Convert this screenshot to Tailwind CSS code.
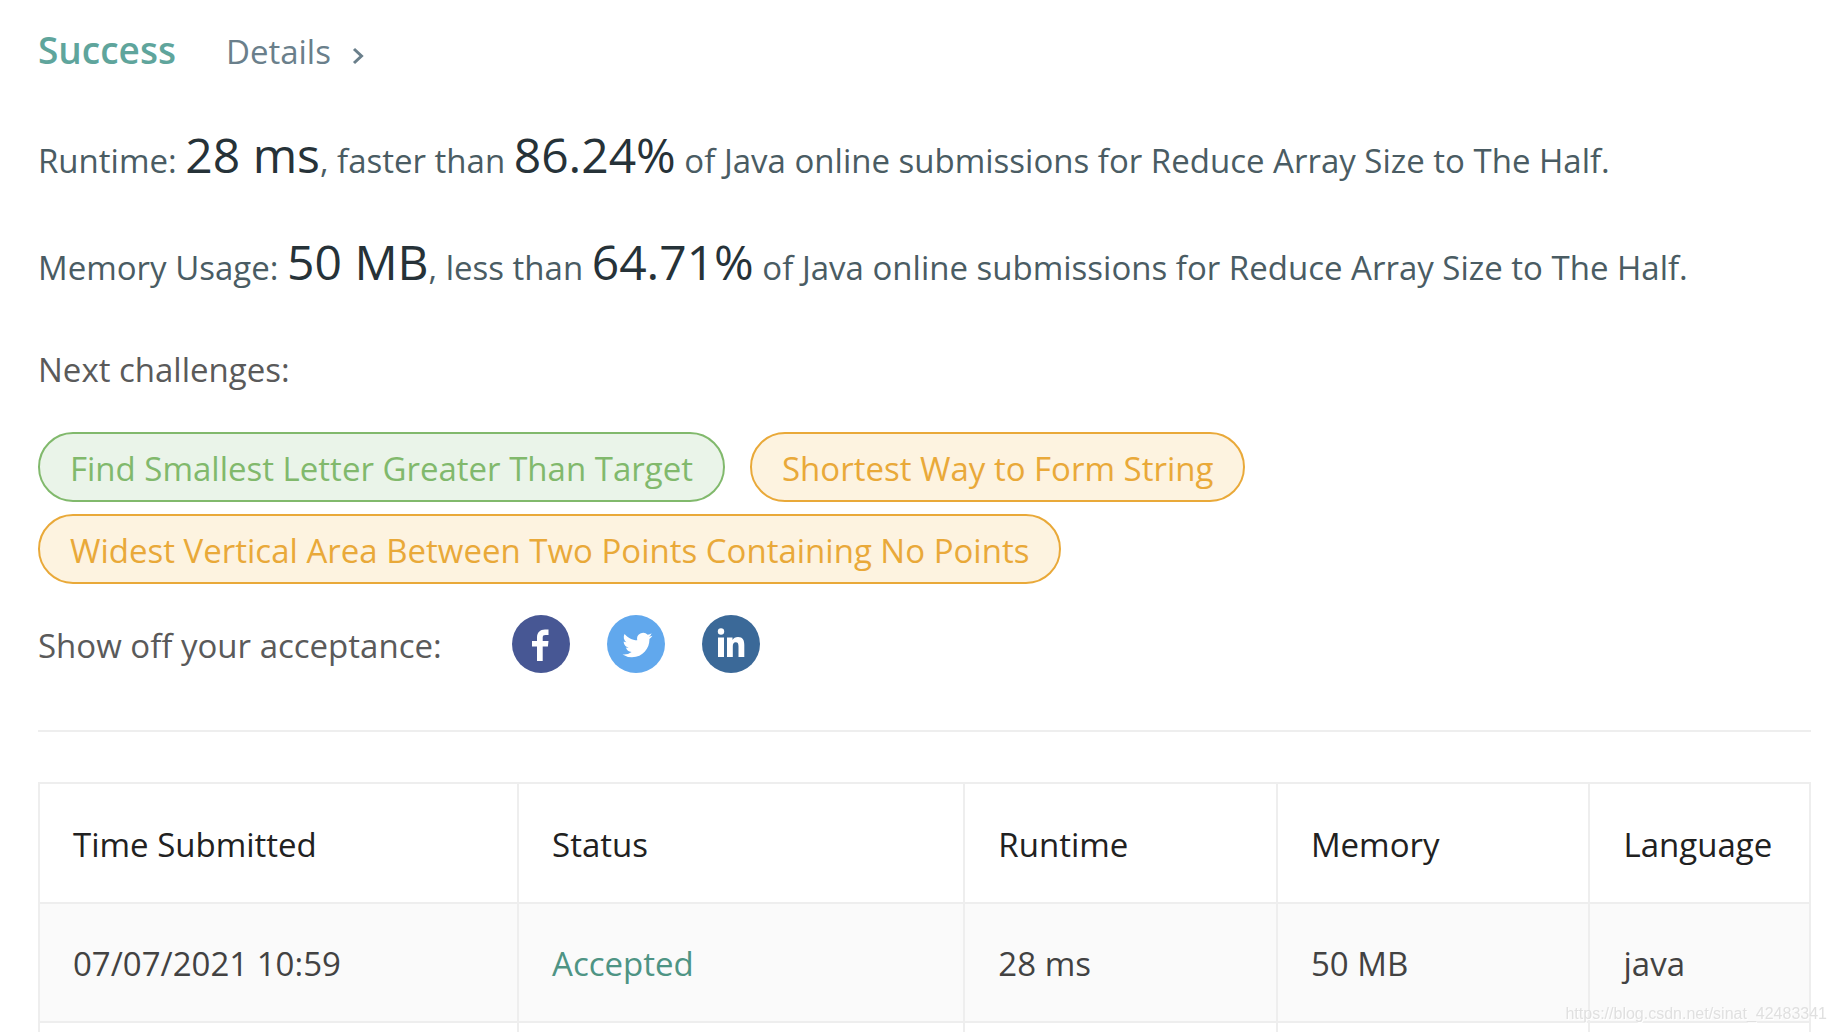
<!DOCTYPE html>
<html lang="en">
<head>
<meta charset="utf-8">
<meta name="viewport" content="width=device-width, initial-scale=1">
<title>Submission result</title>
<script src="https://cdn.jsdelivr.net/npm/@tailwindcss/browser@4"></script>
</head>
<body class="bg-white font-['Open_Sans','Noto_Sans',sans-serif] text-[33px] leading-[48px] text-[#5a5a5a]">
<main class="pt-[26px] pr-6 pl-[38px]">
  <header class="flex items-baseline gap-[50px]">
    <h1 class="text-[37px] font-semibold text-[#5fa59c]">Success</h1>
    <a href="#details" class="flex items-center gap-[21px] text-[#6a7f8b]">Details
      <svg class="mt-2 h-[18px] w-3" viewBox="0 0 12 18" fill="none" stroke="currentColor" stroke-width="3" aria-hidden="true"><path d="M2 2l7.500 7L2 16"/></svg>
    </a>
  </header>

  <section class="mt-[53px] flex flex-col gap-[43px] leading-[64px] text-[#4a5c63]">
    <p>Runtime: <span class="text-[48px] leading-none text-[#263238]">28 ms</span>, faster than <span class="text-[48px] leading-none text-[#263238]">86.24%</span> of Java online submissions for Reduce Array Size to The Half.</p>
    <p>Memory Usage: <span class="text-[48px] leading-none text-[#263238]">50 MB</span>, less than <span class="text-[48px] leading-none text-[#263238]">64.71%</span> of Java online submissions for Reduce Array Size to The Half.</p>
  </section>

  <section class="mt-[46px]">
    <h2>Next challenges:</h2>
    <div class="mt-[38px] flex flex-wrap gap-x-[25px] gap-y-3">
      <a href="#letter" class="flex h-[70px] items-center rounded-full border-2 border-[#81b96c] bg-[#eaf4e9] px-[30px] pt-[3px] text-[#81b96c]">Find Smallest Letter Greater Than Target</a>
      <a href="#form-string" class="flex h-[70px] items-center rounded-full border-2 border-[#e9a939] bg-[#fdf3e0] px-[30px] pt-[3px] text-[#e9a939]">Shortest Way to Form String</a>
      <a href="#widest" class="flex h-[70px] items-center rounded-full border-2 border-[#e9a939] bg-[#fdf3e0] px-[30px] pt-[3px] text-[#e9a939]">Widest Vertical Area Between Two Points Containing No Points</a>
    </div>
  </section>

  <section class="mt-[31px] flex items-center">
    <p class="w-[474px] pt-[3px]">Show off your acceptance:</p>
    <div class="flex gap-[37px]">
      <button type="button" aria-label="Share on Facebook"><svg class="size-[58px]" viewBox="0 0 58 58"><circle cx="29" cy="29" r="29" fill="#475794"/><path fill="#fff" d="M25 46V31.500h-5V26h5v-3.500c0-5 3-8 8-8h3.500V20H33.500c-2 0-2.800.8-2.800 2.600V26h5.800l-.6 5.500h-5.200V46z"/></svg></button>
      <button type="button" aria-label="Share on Twitter"><svg class="size-[58px]" viewBox="0 0 58 58"><circle cx="29" cy="29" r="29" fill="#61a8ed"/><path fill="#fff" transform="translate(15.500 15) scale(1.250)" d="M23.950 4.570a10 10 0 0 1-2.820.78 4.960 4.960 0 0 0 2.160-2.730c-.95.560-2 .960-3.130 1.190a4.920 4.920 0 0 0-8.380 4.480C7.690 8.100 4.070 6.130 1.640 3.160a4.930 4.930 0 0 0 1.520 6.570 4.900 4.900 0 0 1-2.230-.61v.06c0 2.390 1.690 4.380 3.950 4.830a5 5 0 0 1-2.210.08 4.940 4.940 0 0 0 4.600 3.420A9.870 9.870 0 0 1 0 19.540a13.990 13.990 0 0 0 7.550 2.210c9.050 0 14-7.500 14-13.980 0-.21 0-.42-.02-.63a9.940 9.940 0 0 0 2.420-2.570z"/></svg></button>
      <button type="button" aria-label="Share on LinkedIn"><svg class="size-[58px]" viewBox="0 0 58 58"><circle cx="29" cy="29" r="29" fill="#3b6998"/><g fill="#fff"><circle cx="19" cy="16.500" r="3.200"/><path d="M16 22.500h6V42h-6zM25 22.500h5.500v2.600c1-1.900 2.900-3.100 5.500-3.100 4.800 0 6.300 3 6.300 8V42h-5.800V31.500c0-2.800-.6-4.300-2.700-4.300-2.300 0-3 1.700-3 4.300V42H25z"/></g></svg></button>
    </div>
  </section>

  <hr class="mt-[57px] border-t-2 border-[#eeeeee]">

  <table class="mt-[50px] w-full table-fixed border-collapse text-left text-[#424242] [&_td]:border-x-2 [&_td]:border-[#eeeeee] [&_td]:pt-[3px] [&_td]:pl-[33px] [&_th]:border-2 [&_th]:border-[#eeeeee] [&_th]:pt-[3px] [&_th]:pl-[33px] [&_th]:font-normal">
    <colgroup><col class="w-[27.05%]"><col class="w-[25.2%]"><col class="w-[17.65%]"><col class="w-[17.65%]"><col></colgroup>
    <thead>
      <tr class="h-[120px] text-[#212121]"><th scope="col">Time Submitted</th><th scope="col">Status</th><th scope="col">Runtime</th><th scope="col">Memory</th><th scope="col">Language</th></tr>
    </thead>
    <tbody>
      <tr class="h-[119px] border-b-2 border-[#eeeeee] bg-[#fafafa]"><td>07/07/2021 10:59</td><td><a href="#accepted" class="text-[#4e9484]">Accepted</a></td><td>28 ms</td><td>50 MB</td><td>java</td></tr>
      <tr class="h-[10px]"><td></td><td></td><td></td><td></td><td></td></tr>
    </tbody>
  </table>
</main>
<p class="fixed right-2 bottom-2 font-['Liberation_Sans',sans-serif] text-[16px] leading-5 text-[#e0e0e0] [text-shadow:1px_1px_0_#ffffff]">https://blog.csdn.net/sinat_42483341</p>
</body>
</html>
